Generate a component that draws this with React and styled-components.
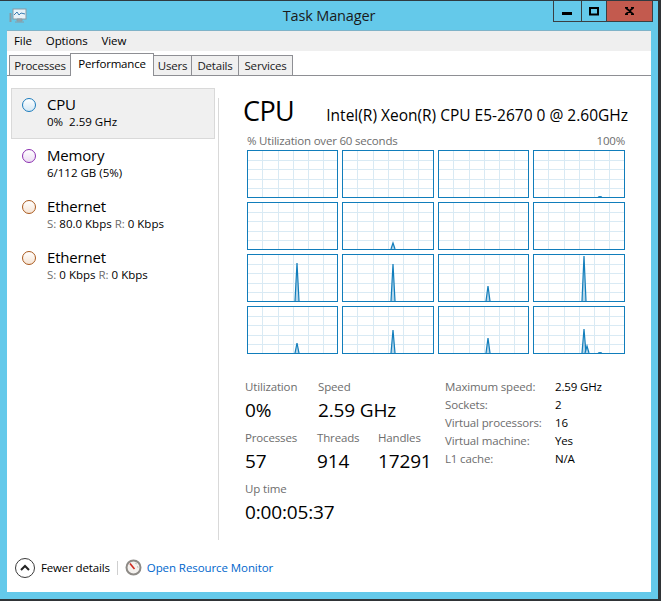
import React from 'react'
import styled, { createGlobalStyle } from 'styled-components'

const Global = createGlobalStyle`
html, body { margin: 0; padding: 0; overflow: hidden; background: #64c9ea; }
* { box-sizing: border-box; }
`

const sidebarItems = [
  { name: 'CPU', tone: 'cpu', selected: true, sub: <Plain>0%&nbsp; 2.59 GHz</Plain> },
  { name: 'Memory', tone: 'mem', sub: <Plain>6/112 GB (5%)</Plain> },
  { name: 'Ethernet', tone: 'net', sub: <><Dim>S:</Dim> 80.0 Kbps <Dim>R:</Dim> 0 Kbps</> },
  { name: 'Ethernet', tone: 'net', sub: <><Dim>S:</Dim> 0 Kbps <Dim>R:</Dim> 0 Kbps</> },
]

function Plain({ children }) {
  return <span>{children}</span>
}

function Dim({ children }) {
  return <DimText>{children}</DimText>
}

const tabs = [
  { label: 'Processes', width: 62 },
  { label: 'Performance', width: 84, active: true },
  { label: 'Users', width: 39 },
  { label: 'Details', width: 48 },
  { label: 'Services', width: 55 },
]

// spikes: [x, top] measured inside each graph, 46 is the floor
const graphs = [
  [], [], [], [[66, 45.5]],
  [], [[50, 40]], [], [],
  [[49, 8]], [[50, 9]], [[49, 31]], [[50, 1]],
  [[49, 36]], [[50, 23]], [[49, 31]], [[50, 22], [53, 39], [66, 45.5]],
]

const specs = [
  ['Maximum speed:', '2.59 GHz'],
  ['Sockets:', '2'],
  ['Virtual processors:', '16'],
  ['Virtual machine:', 'Yes'],
  ['L1 cache:', 'N/A'],
]

const gridX = [14.5, 30.5, 45.5, 60.5, 75.5]
const gridY = [9.5, 18.5, 28.5, 37.5]

function Graph({ spikes }) {
  return (
    <GraphBox>
      <svg width="100%" height="46">
        {gridX.map(x => <line key={x} x1={x} x2={x} y1="0" y2="46" stroke="#d9eaf4" />)}
        {gridY.map(y => <line key={y} x1="0" x2="90" y1={y} y2={y} stroke="#d9eaf4" />)}
        {spikes.map(([x, top]) => (
          <path
            key={x}
            d={`M${x - 2} 46L${x} ${top}L${x + 2} 46`}
            fill="#b5d6ea"
            stroke="#117dbb"
            strokeWidth="1.2"
          />
        ))}
      </svg>
    </GraphBox>
  )
}

function Stat({ label, value, width }) {
  return (
    <StatBox $width={width}>
      <StatLabel>{label}</StatLabel>
      <StatValue>{value}</StatValue>
    </StatBox>
  )
}

export default function App() {
  return (
    <Window>
      <Global />
      <TitleBar>
        <AppIcon width="18" height="16" viewBox="0 0 18 16">
          <rect x="4" y="1" width="13" height="10" fill="#e8f2f8" stroke="#8a9aa3" />
          <path d="M5 7l3-3 2 3 2-2 4 1" fill="none" stroke="#3b7db0" />
          <path d="M8 11h5v2H8zM6 14h9" fill="#9aa5ab" stroke="#8a9aa3" />
          <path d="M1.5 5v9" stroke="#8a9aa3" strokeWidth="2" />
        </AppIcon>
        <Title>Task Manager</Title>
        <Controls>
          <ControlButton $width={29}>
            <svg width="11" height="11"><rect width="10" height="3" y="6" fill="#000" /></svg>
          </ControlButton>
          <ControlButton $width={26}>
            <svg width="10" height="9"><rect x="1" y="1" width="8" height="6.5" fill="none" stroke="#000" strokeWidth="2" /></svg>
          </ControlButton>
          <ControlButton $width={47} $close>
            <svg width="9" height="8"><path d="M0.5 0.5L8.5 7.5M8.5 0.5L0.5 7.5M0 0h3M6 0h3M0 8h3M6 8h3" stroke="#000" strokeWidth="1.8" /></svg>
          </ControlButton>
        </Controls>
      </TitleBar>

      <Content>
        <MenuBar>
          <MenuItem>File</MenuItem>
          <MenuItem>Options</MenuItem>
          <MenuItem>View</MenuItem>
        </MenuBar>

        <TabStrip>
          {tabs.map(t => <Tab key={t.label} $active={t.active} $width={t.width}>{t.label}</Tab>)}
        </TabStrip>

        <Body>
          <Sidebar>
            {sidebarItems.map((item, i) => (
              <SideItem key={i} $selected={item.selected}>
                <Dot $tone={item.tone} />
                <div>
                  <SideName>{item.name}</SideName>
                  <SideSub>{item.sub}</SideSub>
                </div>
              </SideItem>
            ))}
          </Sidebar>

          <Main>
            <Header>
              <BigTitle>CPU</BigTitle>
              <CpuName>Intel(R) Xeon(R) CPU E5-2670 0 @ 2.60GHz</CpuName>
            </Header>
            <GraphCaption>
              <span>% Utilization over 60 seconds</span>
              <span>100%</span>
            </GraphCaption>
            <GraphGrid>
              {graphs.map((spikes, i) => <Graph key={i} spikes={spikes} />)}
            </GraphGrid>

            <Stats>
              <StatColumn>
                <StatRow>
                  <Stat label="Utilization" value="0%" width={73} />
                  <Stat label="Speed" value="2.59 GHz" />
                </StatRow>
                <StatRow>
                  <Stat label="Processes" value="57" width={72} />
                  <Stat label="Threads" value="914" width={61} />
                  <Stat label="Handles" value="17291" />
                </StatRow>
                <StatRow>
                  <Stat label="Up time" value="0:00:05:37" />
                </StatRow>
              </StatColumn>
              <SpecTable>
                {specs.map(([k, v]) => (
                  <React.Fragment key={k}>
                    <SpecKey>{k}</SpecKey>
                    <SpecValue>{v}</SpecValue>
                  </React.Fragment>
                ))}
              </SpecTable>
            </Stats>
          </Main>
        </Body>

        <Footer>
          <FewerIcon>
            <svg width="10" height="7" viewBox="0 0 10 7">
              <path d="M1 6l4-4 4 4" fill="none" stroke="#222" strokeWidth="2" />
            </svg>
          </FewerIcon>
          <FooterText>Fewer details</FooterText>
          <FooterRule />
          <MonitorIcon width="17" height="17" viewBox="0 0 17 17">
            <circle cx="8.5" cy="8.5" r="7" fill="#f4f1ee" stroke="#8d8a86" strokeWidth="2" />
            <path d="M5 4.5L9.5 10" stroke="#d0281e" strokeWidth="1.6" />
            <path d="M10 4l2 1M12.5 7l.5 2" stroke="#c9c5c0" />
          </MonitorIcon>
          <FooterLink>Open Resource Monitor</FooterLink>
        </Footer>
      </Content>
    </Window>
  )
}

const Window = styled.div`
  width: 661px;
  height: 601px;
  display: flex;
  flex-direction: column;
  background: #64c9ea;
  border-top: 1px solid #2f3a40;
  border-right: 3px solid #2f3336;
  border-bottom: 2px solid #2f3336;
  padding: 0 7px 7px 7px;
  font-family: "Open Sans", "Noto Sans", sans-serif;
  color: #000;
`

const TitleBar = styled.div`
  height: 29px;
  flex: none;
  display: grid;
  grid-template-columns: 1fr auto 1fr;
  align-items: start;
`

const AppIcon = styled.svg`
  margin: 7px 0 0 2px;
`

const Title = styled.div`
  font-size: 14.5px;
  line-height: 20px;
  margin-top: 5px;
  color: #1a1a1a;
  letter-spacing: -0.15px;
`

const Controls = styled.div`
  display: flex;
  justify-content: flex-end;
  margin-right: -2px;
`

const ControlButton = styled.div`
  width: ${p => p.$width}px;
  height: 21px;
  display: flex;
  align-items: center;
  justify-content: center;
  background: ${p => (p.$close ? '#c35a4e' : 'transparent')};
  border: 1px solid #3a3f42;
  border-top: none;
  margin-left: -1px;
`

const Content = styled.div`
  flex: 1;
  display: flex;
  flex-direction: column;
  background: #fff;
  border-top: 1px solid #7fb3c8;
  min-height: 0;
`

const MenuBar = styled.div`
  height: 20px;
  flex: none;
  display: flex;
  align-items: center;
  gap: 14px;
  padding: 0 0 2px 7px;
  background: #efefef;
`

const MenuItem = styled.span`
  font-size: 11.5px;
  letter-spacing: -0.1px;
`

const TabStrip = styled.div`
  height: 25px;
  flex: none;
  display: flex;
  align-items: flex-end;
  padding-left: 2px;
  border-bottom: 1px solid #8e8f94;
`

const Tab = styled.div`
  width: ${p => p.$width}px;
  font-size: 11.5px;
  letter-spacing: -0.2px;
  display: flex;
  align-items: center;
  justify-content: center;
  border: 1px solid #8e8f94;
  height: ${p => (p.$active ? '23px' : '20px')};
  margin-bottom: ${p => (p.$active ? '-1px' : '0')};
  border-bottom: ${p => (p.$active ? 'none' : '0')};
  background: ${p => (p.$active ? '#fff' : '#f0f0f0')};
  color: ${p => (p.$active ? '#000' : '#1a1a1a')};
  padding-bottom: ${p => (p.$active ? '4px' : '0')};
  position: ${p => (p.$active ? 'relative' : 'static')};
  & + & { margin-left: -1px; }
`

const Body = styled.div`
  height: 464px;
  flex: none;
  display: flex;
`

const Sidebar = styled.div`
  width: 211px;
  flex: none;
  padding: 12px 3px 0 4px;
`

const SideItem = styled.div`
  height: 51px;
  display: flex;
  gap: 11px;
  padding: 5px 0 0 10px;
  border: 1px solid ${p => (p.$selected ? '#d9d9d9' : 'transparent')};
  background: ${p => (p.$selected ? '#f0f0f0' : 'transparent')};
`

const toneColors = {
  cpu: ['#1b7cbd', '#d5e8f5'],
  mem: ['#8b2fb0', '#ecdcf3'],
  net: ['#a9591d', '#f6e4d4'],
}

const Dot = styled.span`
  width: 14px;
  height: 14px;
  margin-top: 4px;
  flex: none;
  border-radius: 50%;
  border: 1.3px solid ${p => toneColors[p.$tone][0]};
  background: linear-gradient(#fff, ${p => toneColors[p.$tone][1]});
`

const SideName = styled.div`
  font-size: 15px;
  line-height: 20px;
  letter-spacing: -0.2px;
`

const SideSub = styled.div`
  font-size: 11.5px;
  line-height: 15px;
  white-space: nowrap;
`

const DimText = styled.span`
  color: #6d6d6d;
`

const Main = styled.div`
  width: 408px;
  height: 442px;
  margin-top: 22px;
  padding-left: 24px;
  border-left: 1px solid #d9d9d9;
`

const Header = styled.div`
  display: flex;
  align-items: baseline;
  justify-content: space-between;
  width: 385px;
  height: 29px;
  margin-top: -2px;
`

const BigTitle = styled.div`
  font-size: 27px;
  line-height: 29px;
  letter-spacing: -0.6px;
`

const CpuName = styled.div`
  font-size: 15.5px;
  white-space: nowrap;
`

const GraphCaption = styled.div`
  display: flex;
  justify-content: space-between;
  margin: 8px 0 0 4px;
  width: 378px;
  height: 16px;
  line-height: 16px;
  font-size: 11.5px;
  letter-spacing: -0.2px;
  color: #6d6d6d;
`

const GraphGrid = styled.div`
  display: grid;
  grid-template-columns: 91px 92px 91px 92px;
  grid-auto-rows: 48px;
  gap: 4px;
  margin: 1px 0 0 4px;
`

const GraphBox = styled.div`
  border: 1px solid #117dbb;
  background: #fff;
  overflow: hidden;
  svg { display: block; }
`

const Stats = styled.div`
  display: flex;
  margin: 25px 0 0 2px;
`

const StatColumn = styled.div`
  width: 200px;
  flex: none;
`

const StatRow = styled.div`
  display: flex;
  height: 51px;
`

const StatBox = styled.div`
  width: ${p => (p.$width ? `${p.$width}px` : 'auto')};
  white-space: nowrap;
`

const StatLabel = styled.div`
  font-size: 11.5px;
  line-height: 16px;
  letter-spacing: -0.15px;
  color: #6d6d6d;
`

const StatValue = styled.div`
  font-size: 19px;
  line-height: 30px;
  letter-spacing: -0.15px;
`

const SpecTable = styled.div`
  display: grid;
  grid-template-columns: 110px 1fr;
  grid-auto-rows: 18px;
  line-height: 18px;
  font-size: 11.5px;
  letter-spacing: -0.15px;
  margin-top: -1px;
`

const SpecKey = styled.div`
  color: #6d6d6d;
`

const SpecValue = styled.div``

const Footer = styled.div`
  flex: 1;
  display: flex;
  align-items: center;
  padding: 3px 0 0 8px;
`

const FewerIcon = styled.div`
  width: 20px;
  height: 20px;
  border: 1.5px solid #3a3a3a;
  border-radius: 50%;
  display: flex;
  align-items: center;
  justify-content: center;
  svg { display: block; }
`

const FooterText = styled.span`
  font-size: 11.5px;
  letter-spacing: -0.15px;
  margin-left: 6px;
`

const FooterRule = styled.span`
  width: 1px;
  height: 14px;
  background: #cfcfcf;
  margin: 0 7px 0 7px;
`

const MonitorIcon = styled.svg`
  margin-bottom: 1px;
`

const FooterLink = styled.span`
  font-size: 11.5px;
  letter-spacing: -0.08px;
  color: #0066cc;
  margin-left: 5px;
`
